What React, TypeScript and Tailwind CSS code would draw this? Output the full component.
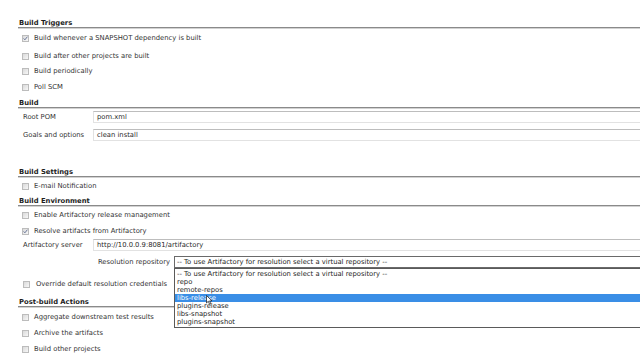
import React from "react";

function Cb({ checked }: { checked?: boolean }) {
  return (
    <span className="relative inline-block w-[7px] h-[7px] shrink-0 border border-[#bcbcbc] bg-linear-to-br from-[#dadada] to-[#f7f7f7]">
      {checked && (
        <svg className="absolute left-0 top-0" width="5" height="5" viewBox="0 0 5 5">
          <path d="M0.6 2.4 L1.9 3.8 L4.4 0.7" fill="none" stroke="#5d6b8f" strokeWidth="0.9" />
        </svg>
      )}
    </span>
  );
}

function Heading({ title, className = "" }: { title: string; className?: string }) {
  return (
    <div className={className}>
      <div className="h-[10px] pt-[3px] leading-[7px] pl-px font-bold text-[#1e1e1e]">{title}</div>
      <div className="h-px bg-[#8a8a8a]" />
      <div className="h-px bg-[#d2d2d2]" />
    </div>
  );
}

function CheckRow({ label, checked, h }: { label: string; checked?: boolean; h: string }) {
  return (
    <div className={`flex items-center pl-[4px] ${h}`}>
      <Cb checked={checked} />
      <span className="ml-[5px] leading-none">{label}</span>
    </div>
  );
}

function Field({ label, value, h }: { label: string; value: string; h: string }) {
  return (
    <div className={`flex items-center ${h}`}>
      <span className="w-[75px] pl-[5px] leading-none shrink-0">{label}</span>
      <div className="flex-1 -mr-[6px] h-[12px] flex items-center pl-[3px] border border-[#e2e2e2] border-t-[#bdbdbd] bg-white">
        <span className="leading-none text-[#2a2a2a]">{value}</span>
      </div>
    </div>
  );
}

const options = [
  "-- To use Artifactory for resolution select a virtual repository --",
  "repo",
  "remote-repos",
  "libs-release",
  "plugins-release",
  "libs-snapshot",
  "plugins-snapshot",
];

export default function App() {
  return (
    <div className="w-[640px] h-[360px] overflow-hidden bg-white text-[6.8px] text-[#333] font-['DejaVu_Sans','Verdana',sans-serif]">
      <div className="pl-[18px] pt-[17px]">
        <Heading title="Build Triggers" />
        <CheckRow h="h-[19px]" checked label="Build whenever a SNAPSHOT dependency is built" />
        <CheckRow h="h-[16px]" label="Build after other projects are built" />
        <CheckRow h="h-[15px]" label="Build periodically" />
        <CheckRow h="h-[17px]" label="Poll SCM" />

        <Heading title="Build" className="mt-px" />
        <Field h="h-[16px]" label="Root POM" value="pom.xml" />
        <Field h="h-[20px]" label="Goals and options" value="clean install" />

        <Heading title="Build Settings" className="mt-[21px]" />
        <CheckRow h="h-[16px]" label="E-mail Notification" />

        <Heading title="Build Environment" className="mt-px" />
        <CheckRow h="h-[17px]" label="Enable Artifactory release management" />
        <CheckRow h="h-[14px]" checked label="Resolve artifacts from Artifactory" />
        <Field h="h-[14px]" label="Artifactory server" value="http://10.0.0.9:8081/artifactory" />

        <div className="mt-[4px] h-[12px] flex items-center">
          <span className="w-[152px] shrink-0 text-right leading-none">Resolution repository</span>
          <div className="relative ml-[4px] -mr-[6px] flex-1 h-[12px]">
            <div className="h-full flex items-center pl-[2px] border border-[#6a6a6a] bg-white">
              <span className="leading-none text-[#1e1e1e] whitespace-nowrap">{options[0]}</span>
            </div>
            <div className="absolute left-0 right-0 top-full z-10 border border-[#5a5a5a] bg-white py-px">
              {options.map((o, i) => (
                <div
                  key={o}
                  className={`h-[8px] leading-[8px] pl-[2px] whitespace-nowrap ${
                    i === 3 ? "bg-[#3a8ee6] text-white" : "text-[#1e1e1e]"
                  }`}
                >
                  {o}
                </div>
              ))}
              <svg className="absolute left-[31px] top-[26px]" width="7" height="10" viewBox="0 0 7 10">
                <path d="M0.5 0.5 L0.5 8 L2.3 6.3 L3.6 9.3 L4.8 8.8 L3.6 5.9 L6 5.9 Z" fill="#fff" stroke="#111" strokeWidth="0.7" strokeLinejoin="round" />
              </svg>
            </div>
          </div>
        </div>

        <div className="mt-[8px] h-[17px] flex items-center pl-[5px]">
          <Cb />
          <span className="ml-[6px] leading-none">Override default resolution credentials</span>
        </div>

        <Heading title="Post-build Actions" className="mt-[3px]" />
        <CheckRow h="h-[18px]" label="Aggregate downstream test results" />
        <CheckRow h="h-[15px]" label="Archive the artifacts" />
        <CheckRow h="h-[17px]" label="Build other projects" />
      </div>
    </div>
  );
}
